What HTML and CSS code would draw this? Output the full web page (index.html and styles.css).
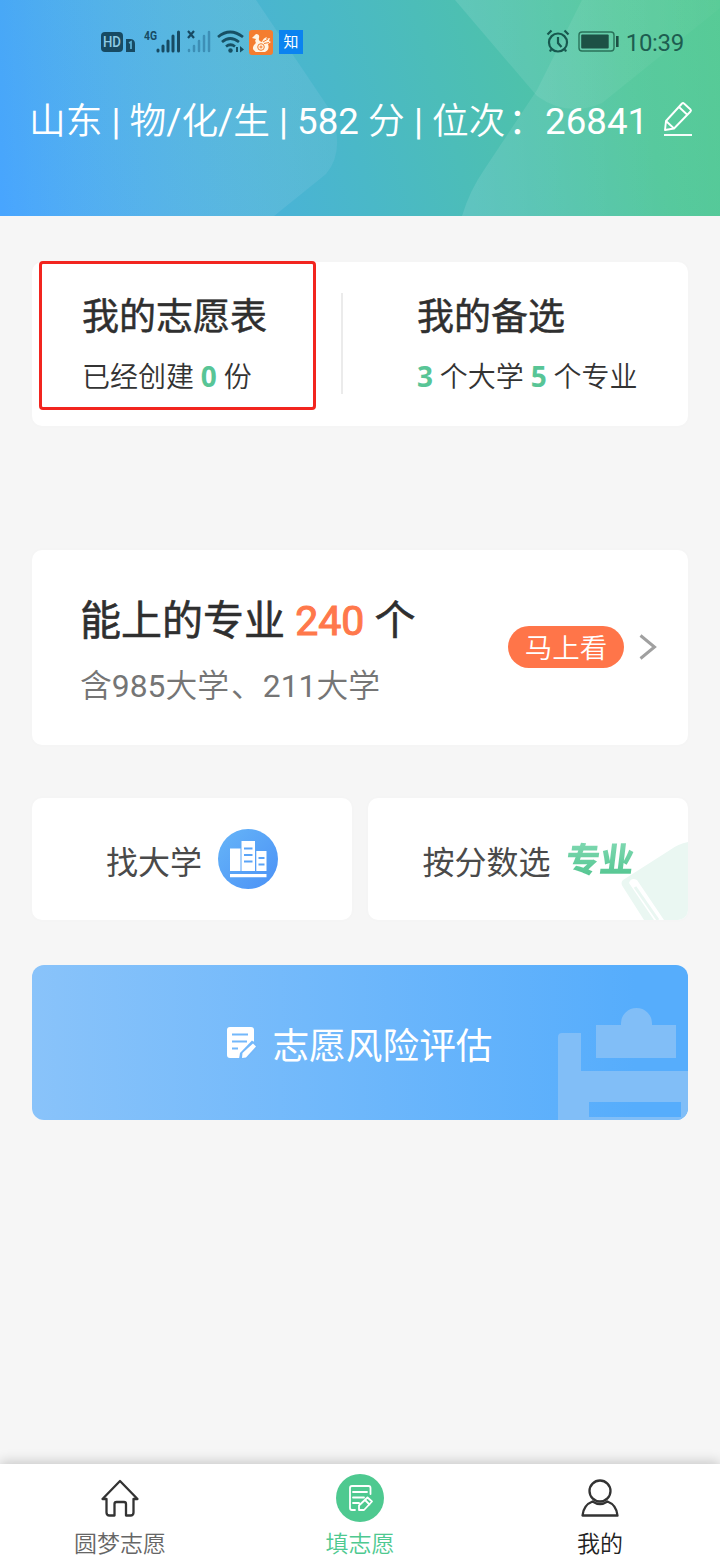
FILE: index.html
```html
<!DOCTYPE html>
<html lang="zh-CN">
<head>
<meta charset="utf-8">
<title>填志愿</title>
<link rel="stylesheet" href="styles.css">
</head>
<body>
<div class="app">
  <header class="header">
    <svg class="header-art" viewBox="0 0 720 216" preserveAspectRatio="none" aria-hidden="true">
      <defs>
        <linearGradient id="artLeft" x1="0" x2="1"><stop offset="0" stop-color="#fff" stop-opacity="0"/><stop offset="1" stop-color="#7fc4e0" stop-opacity=".24"/></linearGradient>
        <linearGradient id="artRight" x1="0" x2="1"><stop offset="0" stop-color="#fff" stop-opacity=".11"/><stop offset="1" stop-color="#fff" stop-opacity="0.02"/></linearGradient>
      </defs>
      <path d="M0 0H256L330 110Q346 150 326 174L274 216H0Z" fill="url(#artLeft)"/>
      <path d="M455 0H720V8L602 103Q568 118 537 96Z" fill="url(#artRight)"/>
      <path d="M582 0H720V216H462Q470 190 484 170L537 90Z" fill="url(#artRight)"/>
    </svg>
    <div class="status">
      <div class="status-left">
        <svg width="36" height="26" viewBox="0 0 36 26">
          <rect x="1" y="3" width="22" height="20" rx="4" fill="#174a63"/>
          <text x="12" y="18" class="hd" textLength="18" lengthAdjust="spacingAndGlyphs">HD</text>
          <path d="M26 10h4q5 0 5 5v8h-9z" fill="#174a63"/><path d="M29 14l2-1v7" fill="none" stroke="#5cb2d6" stroke-width="1.7"/>
        </svg>
        <svg class="signal" width="38" height="26" viewBox="0 0 38 26">
          <text x="0" y="11" class="g4" textLength="13" lengthAdjust="spacingAndGlyphs">4G</text>
          <path d="M14 21v1M19 17v5M24 12v10M29 7v15M34.500 3v19" stroke="#174a63" stroke-width="3" stroke-linecap="round"/>
        </svg>
        <svg class="nosim" width="26" height="26" viewBox="0 0 26 26">
          <path d="M2 2l6 7M8 2l-6 7" stroke="#174a63" stroke-width="2.200"/>
          <path d="M3 21v1M8 17v5M13 12v10M18 7v15M23 3v19" stroke="#3d8fb6" stroke-width="2.500" stroke-linecap="round"/>
        </svg>
        <svg class="wifi" width="28" height="26" viewBox="0 0 28 26">
          <g fill="none" stroke="#175064" stroke-width="2.700"><path d="M1 8Q13 -2 26 8"/><path d="M5 13Q13 6 22 13"/><path d="M9 17.500Q13.500 14 18 17.500"/></g>
          <circle cx="13.500" cy="21.500" r="2.200" fill="#175064"/><path d="M19 18v5h2v-5zM23 17l4 3.500-4 3z" fill="#175064"/>
        </svg>
        <svg class="uc" width="24" height="25" viewBox="0 0 24 25">
          <rect width="24" height="25" rx="3" fill="#f47d30"/>
          <path d="M3 8l4-4q4 0 3 4-1 3 3 4 1-4 5-5l-1 2 4-1-1 3 2 1-3 2q2 6-3 8H7q-5-2-2-7 3-2 1-4L7 9z" fill="#fff4e4"/>
          <g fill="none" stroke="#f47d30"><circle cx="12" cy="17" r="3.300"/><circle cx="12" cy="17" r="1"/><path d="M14 12l5-3M15 13.500l5-1"/></g>
        </svg>
        <span class="zhi">知</span>
      </div>
      <div class="status-right">
        <svg width="24" height="26" viewBox="0 0 24 26" fill="none" stroke="#17584e" stroke-width="2.200">
          <circle cx="12" cy="13.500" r="9"/><path d="M12 8v6l3.500 4M1.500 5.500l4-4M22.500 5.500l-4-4M5 20.500l-1 2M19 20.500l1 2"/>
        </svg>
        <svg class="battery" width="42" height="22" viewBox="0 0 42 22">
          <rect x="1" y="1" width="35" height="19" rx="3" fill="none" stroke="#2a725a" stroke-width="1.400"/>
          <rect x="3.200" y="3.500" width="27.500" height="14" rx="1" fill="#1d5145"/><rect x="38" y="5" width="2.600" height="11" fill="#1d5145"/>
        </svg>
        <span class="time">10:39</span>
      </div>
    </div>
    <div class="profile">
      <span class="profile-text">山东<b> | </b>物<b>/</b>化<b>/</b>生<b> | 582 </b>分<b> | </b>位次<span class="colon">：</span><b>26841</b></span>
      <svg class="edit" width="32" height="38" viewBox="0 0 32 38" fill="none" stroke="#fff" stroke-width="1.900" stroke-linejoin="round">
        <path d="M3 29l1-9L20 2.500q1-1 2 0l6.500 6q1 1 0 2L12 27.500zM17 6l8 7.500M4 20l7.500 7"/><path d="M2 34h28"/>
      </svg>
    </div>
  </header>

  <main class="main">
    <section class="card summary">
      <div class="summary-item marked">
        <h2>我的志愿表</h2>
        <p>已经创建 <b>0</b> 份</p>
      </div>
      <div class="summary-item second">
        <h2>我的备选</h2>
        <p><b>3</b> 个大学 <b>5</b> 个专业</p>
      </div>
    </section>

    <section class="card majors">
      <div class="majors-text">
        <h2>能上的专业 <b>240</b> 个</h2>
        <p>含<b>985</b>大学<span class="comma">、</span><b>211</b>大学</p>
      </div>
      <span class="pill">马上看</span>
      <svg class="chevron" width="18" height="26" viewBox="0 0 18 26" fill="none" stroke="#a0a0a0" stroke-width="3"><path d="M1.500 1.500L15.500 13 1.500 24.500"/></svg>
    </section>

    <section class="tiles">
      <div class="card tile">
        <span>找大学</span>
        <svg class="campus" width="60" height="60" viewBox="0 0 60 60">
          <defs><linearGradient id="disc" x1="0" y1="0" x2="1" y2="1"><stop stop-color="#66b5f8"/><stop offset="1" stop-color="#4b91f6"/></linearGradient></defs>
          <circle cx="30" cy="30" r="30" fill="url(#disc)"/>
          <path d="M12 19.500h10.500V42H12zM23.500 12H37v30H23.500zM38.300 22H48.500v20H38.300zM12 45h36.500v3.200H12z" fill="#fff"/>
          <path d="M26 19.500h8.500M26 26h8.500M26 32.500h8.500M40.500 29h6M40.500 35.500h6" stroke="#5aa4f7" stroke-width="2"/>
        </svg>
      </div>
      <div class="card tile score">
        <svg class="book" width="68" height="80" viewBox="0 0 68 80">
          <path d="M3 40L50 10Q58 4 68 2V80H44L17 40Q11 37 9 43L34 80H24L3 47Q0 43 3 40Z" fill="#eaf7f2"/>
          <path d="M15 47L38 80" stroke="#eaf7f2" stroke-width="3"/>
        </svg>
        <span>按分数选</span>
        <em>专业</em>
      </div>
    </section>

    <section class="banner">
      <svg class="clipboard" width="130" height="113" viewBox="0 0 130 113" fill="#81bef7">
        <path d="M38 18H63V16A15.500 15 0 0 1 94 16V18H118V51H38Z"/>
        <path d="M0 30q0-4 4-4H23V64H130V113H0ZM31 95V110H123V95Z" fill-rule="evenodd"/>
      </svg>
      <svg class="form-icon" width="30" height="34" viewBox="0 0 30 34">
        <path d="M3 1H24q3 0 3 3V15L14 32H3q-3 0-3-3V4q0-3 3-3z" fill="#fff"/>
        <path d="M5 8.500h16M5 15.500h15M5 22.500h6" stroke="#73b8fb" stroke-width="2"/>
        <path d="M12 33l1-6L25 14.500 30 18.500V22L20 33z" fill="#73b8fb"/>
        <path d="M15 32l.5-5L26 17.500l3 3L19 31.500z" fill="#fff"/>
      </svg>
      <span>志愿风险评估</span>
    </section>
  </main>

  <nav class="nav">
    <a class="nav-item">
      <svg width="48" height="48" viewBox="0 0 48 48" fill="none" stroke="#333" stroke-width="2.300" stroke-linejoin="round" stroke-linecap="round">
        <path d="M10.500 25H6.500L24 7 41.500 25H37.500V38.500q0 3-3 3H30V30q0-2-2-2H20.500q-2 0-2 2V41.500H13.500q-3 0-3-3Z"/>
      </svg>
      <span>圆梦志愿</span>
    </a>
    <a class="nav-item active">
      <svg width="48" height="48" viewBox="0 0 48 48" fill="none" stroke="#fff" stroke-width="1.800" stroke-linecap="round" stroke-linejoin="round">
        <circle cx="24" cy="24" r="24" fill="#4ec990" stroke="none"/>
        <path d="M34.500 20V14q0-2-2-2H16q-2 0-2 2V34q0 2 2 2H19M17 18h14M17 23.500h11M17 29h6M23 31.500L31.500 23.500l4.500 4L28 36H23ZM29 26l4.500 4.500"/>
      </svg>
      <span>填志愿</span>
    </a>
    <a class="nav-item me">
      <svg width="48" height="48" viewBox="0 0 48 48" fill="none" stroke="#333" stroke-width="2.300" stroke-linejoin="round">
        <circle cx="24" cy="17" r="10.500"/><path d="M6.500 41.500Q7.500 31 16.500 27.500 24 32.500 31.500 27.500 40.500 31 41.500 41.500Z"/>
      </svg>
      <span>我的</span>
    </a>
  </nav>
</div>
</body>
</html>
```

FILE: styles.css
```css
* { box-sizing: border-box; }
body { margin: 0; font-family: Roboto, "Noto Sans CJK SC", sans-serif; background: #f6f6f6; color: #333; }
h2, p { margin: 0; white-space: nowrap; }
svg { flex: none; display: block; }
.app { width: 720px; height: 1560px; display: flex; flex-direction: column; overflow: hidden; }

.header { position: relative; height: 216px; flex: none; background: linear-gradient(74deg, #48a5ff 0%, #4ab8c8 48%, #50c79a 86%, #54ca94 100%); }
.header-art { position: absolute; inset: 0; width: 100%; height: 100%; }
.status { position: relative; height: 84px; padding: 0 36px 0 100px; display: flex; justify-content: space-between; align-items: center; }
.status-left, .status-right { display: flex; align-items: center; }
.hd { font: 500 14px Roboto, sans-serif; fill: #8ecbe5; text-anchor: middle; }
.g4 { font: 700 13px Roboto, sans-serif; fill: #174a63; }
.signal { margin-left: 8px; }
.nosim { margin-left: 4px; }
.wifi { margin-left: 5px; }
.uc { margin-left: 4px; }
.zhi { width: 24px; height: 24px; margin-left: 6px; background: #0b83f0; color: #fff; font-size: 15px; line-height: 24px; text-align: center; }
.battery { margin-left: 8px; }
.time { margin: 2px 0 0 6px; font-size: 24px; line-height: 30px; color: #1d5d50; letter-spacing: -.3px; }
.profile { position: relative; height: 76px; padding: 0 26px 0 29px; display: flex; align-items: center; justify-content: space-between; color: #fff; }
.profile-text { font-size: 36.700px; line-height: 50px; white-space: nowrap; font-weight: 350; }
.profile-text b { font-weight: 400; white-space: pre; }
.colon { padding-left: 3px; }
.edit { margin-bottom: 4px; }

.main { flex: 1; padding: 46px 32px 0; }
.card { background: #fff; border-radius: 10px; box-shadow: 0 0 6px rgba(0, 0, 0, .015); }
.summary { display: flex; height: 164px; }
.summary-item h2 { font-size: 37px; line-height: 50px; font-weight: 400; -webkit-text-stroke: .5px currentColor; color: #2f2f2f; }
.summary-item p { margin-top: 13px; font-size: 28px; line-height: 40px; font-weight: 350; color: #333; }
.summary-item b { font-family: "Noto Sans", sans-serif; font-weight: 700; color: #58c596; }
.marked { width: 277px; height: 149px; margin: -1px 0 0 7px; padding: 29px 0 0 40px; border: 3px solid #f2251f; border-radius: 4px; }
.second { position: relative; margin-left: 25px; padding: 31px 0 0 76px; }
.second::before { content: ""; position: absolute; left: 0; top: 31px; width: 2px; height: 101px; background: #ebebeb; }

.majors { height: 195px; margin-top: 124px; padding: 0 31px 0 48px; display: flex; align-items: center; }
.majors-text { flex: 1; padding-top: 6px; }
.majors h2 { font-size: 41px; line-height: 56px; font-weight: 400; -webkit-text-stroke: .6px currentColor; color: #2f2f2f; }
.majors h2 b { color: #ff784b; font-weight: 400; -webkit-text-stroke-width: 1.100px; }
.majors p { margin-top: 15px; font-size: 31.800px; line-height: 44px; font-weight: 350; color: #757575; }
.majors p b { font-weight: 400; }
.comma { padding-left: 2px; }
.pill { width: 116px; height: 42px; margin-bottom: 2px; padding-top: 2px; border-radius: 21px; background: #ff7549; color: #fff; font-size: 27.500px; line-height: 42px; font-weight: 350; text-align: center; }
.chevron { margin: 0 0 2px 15px; }

.tiles { display: grid; grid-template-columns: 1fr 1fr; gap: 16px; margin-top: 53px; }
.tile { position: relative; height: 122px; display: flex; align-items: center; justify-content: center; font-size: 32px; line-height: 44px; color: #4a4a4a; overflow: hidden; }
.tile span { position: relative; padding-top: 7px; }
.campus { margin-left: 16px; }
.book { position: absolute; right: 0; bottom: 0; }
.score em { position: relative; margin-left: 15px; padding-top: 2px; font-style: normal; font-weight: 900; font-size: 34px; line-height: 40px; transform: skewX(-7deg); background: linear-gradient(#83dab4, #50c48e); background-clip: text; -webkit-background-clip: text; color: transparent; }

.banner { position: relative; height: 155px; margin-top: 45px; border-radius: 12px; overflow: hidden; display: flex; align-items: center; justify-content: center; background: linear-gradient(90deg, #89c3fa, #56adfc 92%); color: #fff; font-size: 36.700px; line-height: 50px; font-weight: 400; }
.banner span { padding-top: 8px; }
.clipboard { position: absolute; right: 0; bottom: 0; }
.form-icon { margin-right: 15px; }

.nav { position: relative; flex: none; height: 96px; display: grid; grid-template-columns: repeat(3, 1fr); background: #fff; box-shadow: 0 -2px 12px rgba(0, 0, 0, .2); }
.nav-item { display: flex; flex-direction: column; align-items: center; padding-top: 10px; font-size: 23px; line-height: 32px; font-weight: 350; color: #666; }
.nav-item span { margin-top: 7px; }
.nav-item.active { color: #4ec990; }
.nav-item.me { color: #222; }
```
